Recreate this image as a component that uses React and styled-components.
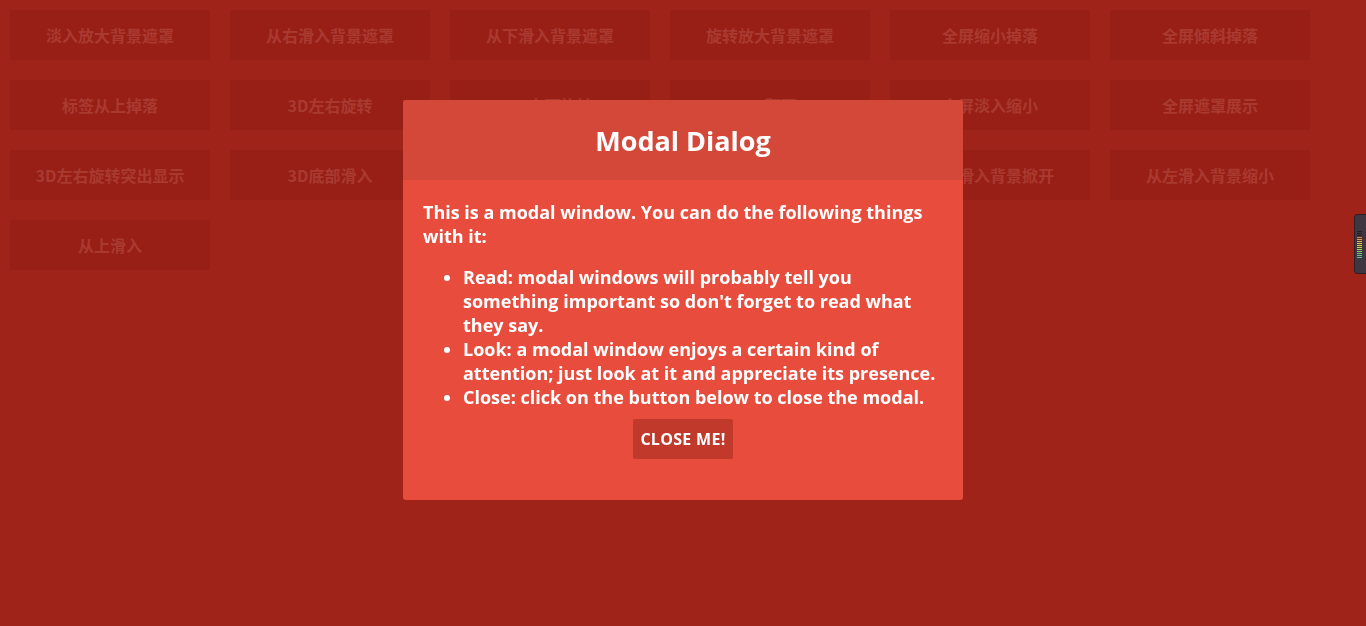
import React from "react";
import styled, { createGlobalStyle } from "styled-components";

const GlobalStyle = createGlobalStyle`
  html, body {
    margin: 0;
    padding: 0;
    height: 100%;
    background: #9f2319;
    overflow: hidden;
  }
`;

// trigger buttons behind the overlay
const Page = styled.div`
  min-height: 626px;
  background: #9f2319;
`;

const Grid = styled.div`
  display: grid;
  grid-template-columns: repeat(6, 200px);
  gap: 20px;
  padding: 10px;
`;

const Trigger = styled.div`
  height: 50px;
  background: #981f16;
  color: #a93a30;
  display: flex;
  align-items: center;
  justify-content: center;
  font-family: "Noto Sans CJK SC", "Noto Sans", sans-serif;
  font-weight: 700;
  font-size: 16px;
`;

// modal
const Modal = styled.div`
  position: fixed;
  top: 100px;
  left: 50%;
  transform: translateX(-50%);
  width: 560px;
  background: #e74c3c;
  border-radius: 3px;
  color: #fff;
  font-family: "Open Sans", sans-serif;
  overflow: hidden;
`;

const Title = styled.h3`
  margin: 0;
  height: 80px;
  display: flex;
  align-items: center;
  justify-content: center;
  background: #d4483a;
  font-size: 27px;
  font-weight: 700;
`;

const Body = styled.div`
  padding: 20px 20px 41px;
  font-size: 18px;
  font-weight: 700;
  line-height: 24px;
`;

const Para = styled.p`
  margin: 0 0 17px;
`;

const List = styled.ul`
  margin: 0 0 10px;
  padding-left: 40px;
`;

const CloseButton = styled.button`
  display: block;
  margin: 0 auto;
  width: 100px;
  height: 40px;
  padding: 0;
  border: none;
  border-radius: 2px;
  background: #c0392b;
  color: #fff;
  font-family: "Open Sans", sans-serif;
  font-weight: 700;
  font-size: 16px;
  letter-spacing: 0.3px;
  text-transform: uppercase;
  cursor: pointer;
`;

// little widget stuck to the right edge
const SideWidget = styled.div`
  position: fixed;
  right: -4px;
  top: 214px;
  width: 12px;
  height: 58px;
  background: #3f3642;
  border: 1px solid #2a2128;
  border-radius: 3px;
  display: flex;
  flex-direction: column;
  justify-content: center;
  align-items: flex-start;
  padding-left: 2px;
  gap: 1px;
`;

const Tick = styled.span`
  width: 5px;
  height: 1px;
  background: ${(p) => p.color};
`;

const triggers = [
  "淡入放大背景遮罩",
  "从右滑入背景遮罩",
  "从下滑入背景遮罩",
  "旋转放大背景遮罩",
  "全屏缩小掉落",
  "全屏倾斜掉落",
  "标签从上掉落",
  "3D左右旋转",
  "3D上下旋转",
  "3D翻页",
  "全屏淡入缩小",
  "全屏遮罩展示",
  "3D左右旋转突出显示",
  "3D底部滑入",
  "3D左侧旋转",
  "背景模糊",
  "从右滑入背景掀开",
  "从左滑入背景缩小",
  "从上滑入",
];

const tickColors = [
  "#222", "#222", "#222", "#e8823a", "#eb9a3c", "#e9b640", "#e6c844",
  "#d8d24a", "#c2d64f", "#a6d65a", "#8bd468", "#72d07a", "#5ecb8c", "#4fc6a0",
];

const App = () => {
  return (
    <Page>
      <GlobalStyle />
      <Grid>
        {triggers.map((t, i) => (
          <Trigger key={i}>{t}</Trigger>
        ))}
      </Grid>

      <Modal>
        <Title>Modal Dialog</Title>
        <Body>
          <Para>
            This is a modal window. You can do the following things with it:
          </Para>
          <List>
            <li>
              Read: modal windows will probably tell you something important
              so don't forget to read what they say.
            </li>
            <li>
              Look: a modal window enjoys a certain kind of attention; just
              look at it and appreciate its presence.
            </li>
            <li>Close: click on the button below to close the modal.</li>
          </List>
          <CloseButton>Close me!</CloseButton>
        </Body>
      </Modal>

      <SideWidget>
        {tickColors.map((c, i) => (
          <Tick key={i} color={c} />
        ))}
      </SideWidget>
    </Page>
  );
};

export default App;
